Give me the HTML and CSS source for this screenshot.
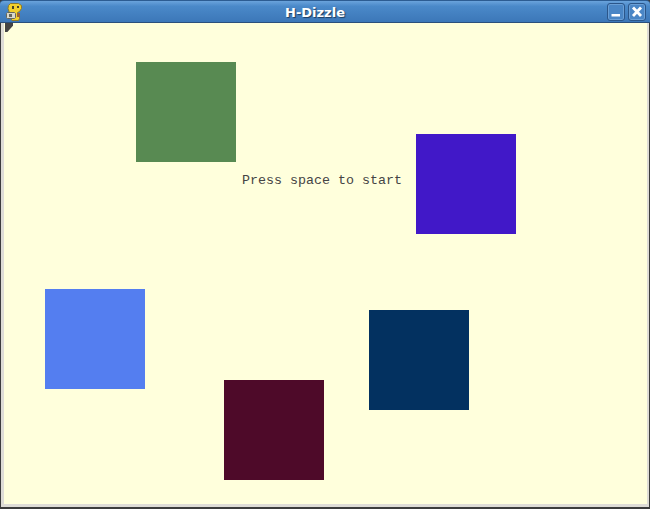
FILE: index.html
```html
<!DOCTYPE html>
<html lang="en">
<head>
  <meta charset="UTF-8">
  <title>H-Dizzle</title>
  <link rel="stylesheet" href="styles.css">
</head>
<body>
  <div class="window">
    <!-- Title bar -->
    <div class="titlebar">
      <svg class="app-icon" width="17" height="18" viewBox="0 0 17 18">
        <path d="M2.500 2.500l2-2h8l3 2v3l-2 3-2 1v3l2 1v2l-1 2H6l-1-2v-5l-2-2-1-3z" fill="#f2d02c" stroke="#8f7a28"/>
        <path d="M0.500 10.500l1-1h7l1 1v4l-1 1h-7l-1-1z" fill="#d8d8cc" stroke="#66675c"/>
        <rect x="3" y="11" width="3" height="3" fill="#66675c"/>
        <rect x="11" y="10" width="3" height="4" fill="#9a6238"/>
        <rect x="6" y="3" width="2" height="3" fill="#4a4226"/>
        <rect x="11" y="3" width="2" height="2" fill="#4a4226"/>
      </svg>
      <h1 class="title">H-Dizzle</h1>
      <div class="buttons">
        <div class="win-btn">
          <svg width="16" height="16" viewBox="0 0 16 16"><rect x="3.500" y="10" width="8.500" height="2.500" fill="#fff"/></svg>
        </div>
        <div class="win-btn">
          <svg width="16" height="16" viewBox="0 0 16 16"><path d="M4 3.500l8 8.500M12 3.500l-8 8.500" stroke="#fff" stroke-width="2.800" fill="none"/></svg>
        </div>
      </div>
    </div>

    <!-- Game area -->
    <div class="frame">
      <div class="canvas">
        <div class="corner"></div>
        <div class="square green"></div>
        <div class="square violet"></div>
        <div class="square blue"></div>
        <div class="square navy"></div>
        <div class="square maroon"></div>
        <p class="prompt">Press space to start</p>
      </div>
    </div>
  </div>
</body>
</html>
```

FILE: styles.css
```css
/* Body and global layout */
html, body {
  margin: 0;
  padding: 0;
  height: 100%;
  overflow: hidden;
}

.window {
  width: 650px;
  height: 509px;
  display: flex;
  flex-direction: column;
  background: #3c3c3c;
  font-family: "DejaVu Sans", sans-serif;
}

/* Title bar */
.titlebar {
  height: 23px;
  flex: none;
  display: flex;
  align-items: center;
  position: relative;
  padding: 1px 4px 0 6px;
  background: linear-gradient(#6aa3dc 0%, #4a89c9 25%, #3c77b8 100%);
  border-top: 1px solid #2c5c92;
  border-bottom: 1px solid #2a4f7c;
  box-sizing: border-box;
  border-radius: 4px 4px 0 0;
}

.app-icon {
  flex: none;
}

.title {
  position: absolute;
  left: 0;
  right: 20px;
  top: 3px;
  margin: 0;
  text-align: center;
  font-size: 13px;
  line-height: 17px;
  font-weight: 700;
  color: white;
  text-shadow: 1px 1px 1px #1d3c5f;
}

.buttons {
  margin-left: auto;
  display: flex;
  gap: 3px;
}

.win-btn {
  width: 18px;
  height: 18px;
  box-sizing: border-box;
  border: 1px solid #2b568a;
  border-radius: 3px;
  box-shadow: inset 0 0 0 1px #6a9fd6;
  background: #4a86c6;
  display: flex;
  align-items: center;
  justify-content: center;
}

.win-btn svg {
  flex: none;
}

/* Frame round the game */
.frame {
  flex: 1;
  display: flex;
  margin: 0 0 2px 1px;
  padding: 0 2px 3px 3px;
  background: #dedcd6;
  border-right: 1px solid #3c3c3c;
}

.canvas {
  flex: 1;
  position: relative;
  background: #ffffdc;
}

.corner {
  position: absolute;
  left: 1px;
  top: 0;
  width: 8px;
  height: 9px;
  background: #444;
  clip-path: polygon(0 0, 100% 0, 100% 30%, 60% 70%, 30% 100%, 0 100%);
}

/* Squares sit on a free canvas */
.square {
  position: absolute;
  width: 100px;
  height: 100px;
}

.green { left: 132px; top: 39px; background: #588a52; }
.violet { left: 412px; top: 111px; background: #4118c8; }
.blue { left: 41px; top: 266px; background: #547ef0; }
.navy { left: 365px; top: 287px; background: #033160; }
.maroon { left: 220px; top: 357px; background: #4e0a29; }

.prompt {
  position: absolute;
  left: 238px;
  top: 150px;
  margin: 0;
  font-family: "Liberation Mono", monospace;
  font-size: 13.33px;
  line-height: 16px;
  color: #444;
}
```
